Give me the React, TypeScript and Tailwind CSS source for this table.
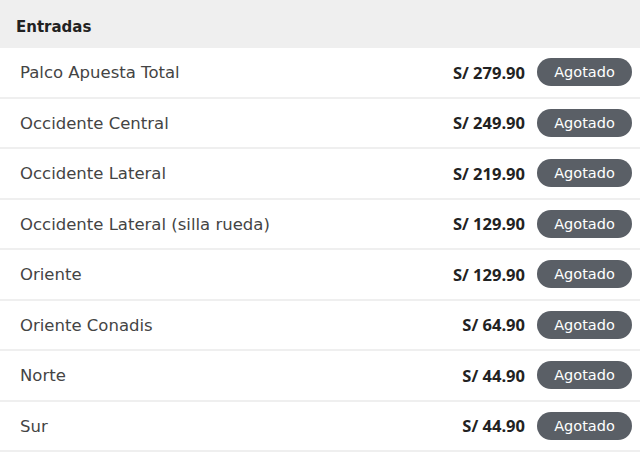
import React from 'react';

const tickets = [
  { name: 'Palco Apuesta Total', price: 'S/ 279.90' },
  { name: 'Occidente Central', price: 'S/ 249.90' },
  { name: 'Occidente Lateral', price: 'S/ 219.90' },
  { name: 'Occidente Lateral (silla rueda)', price: 'S/ 129.90' },
  { name: 'Oriente', price: 'S/ 129.90' },
  { name: 'Oriente Conadis', price: 'S/ 64.90' },
  { name: 'Norte', price: 'S/ 44.90' },
  { name: 'Sur', price: 'S/ 44.90' },
];

export default function App() {
  return (
    <div className="w-[640px] h-[453px] bg-white overflow-hidden font-['DejaVu_Sans',sans-serif]">
      <div className="h-[48px] bg-[#efefef] flex items-center pl-4 pt-[7px]">
        <span className="text-[15px] font-bold text-[#222]">Entradas</span>
      </div>
      {tickets.map((t) => (
        <div key={t.name} className="h-[50.5px] flex items-center border-b-2 border-[#efefef] pl-5 pr-[8px]">
          <span className="flex-1 text-[16.5px] text-[#444] pt-[3px]">{t.name}</span>
          <span className="text-[16.5px] font-bold text-[#222] mr-3 pt-[2px] font-['Open_Sans',sans-serif]">{t.price}</span>
          <span className="w-[95px] h-[28px] rounded-full bg-[#5a5f66] text-white text-[14.5px] flex items-center justify-center pt-[2px]">Agotado</span>
        </div>
      ))}
    </div>
  );
}
